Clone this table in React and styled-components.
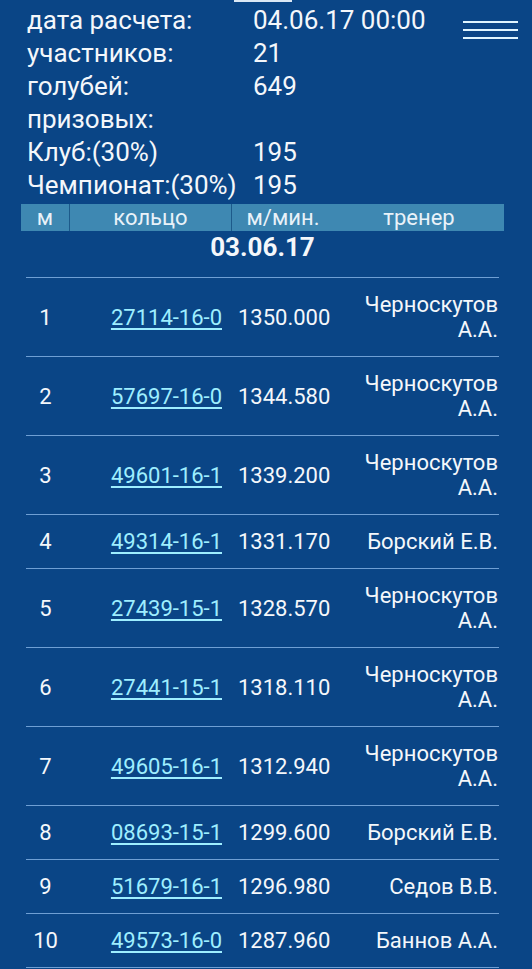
import React from "react";
import styled, { createGlobalStyle } from "styled-components";

const GlobalStyle = createGlobalStyle`
  html, body {
    margin: 0;
    padding: 0;
    background: #0a4586;
  }
  body {
    font-family: Roboto, "Liberation Sans", sans-serif;
    color: #f4f7fb;
  }
`;

const Page = styled.div`
  position: relative;
  width: 532px;
  min-height: 969px;
  overflow: hidden;
`;

const TopTab = styled.div`
  position: absolute;
  top: 0;
  left: 234px;
  width: 58px;
  height: 2px;
  background: #dbe8f5;
`;

const MenuButton = styled.div`
  position: absolute;
  top: 21px;
  left: 463px;
  width: 55px;
  display: flex;
  flex-direction: column;
  gap: 6px;
`;

const MenuLine = styled.span`
  display: block;
  height: 2px;
  background: #dff5ff;
`;

const Info = styled.div`
  display: grid;
  grid-template-columns: 226px auto;
  padding: 4px 0 0 27px;
  font-size: 26px;
  line-height: 33px;
`;

const TableHead = styled.div`
  display: grid;
  grid-template-columns: 49px 162px 102px 1fr;
  margin: 2px 28px 0 21px;
  height: 27px;
  background: #3e88b2;
  font-size: 22px;
  line-height: 27px;
  color: #e9f2f9;
`;

const HeadCell = styled.div`
  text-align: center;
  border-right: ${(p) => (p.$divider ? "1px solid #1d5a8a" : "none")};
`;

const DateRow = styled.div`
  margin: 0 33px 0 26px;
  padding: 0 0 14px;
  text-align: center;
  font-size: 26px;
  font-weight: 700;
  line-height: 32px;
  border-bottom: 1px solid #6f9fd4;
`;

const Row = styled.div`
  display: grid;
  grid-template-columns: 39px 169px 100px 1fr;
  align-items: center;
  margin: 0 33px 0 26px;
  padding: 14px 0;
  border-bottom: 1px solid #6f9fd4;
  font-size: 22px;
  line-height: 25px;
`;

const Place = styled.div`
  text-align: center;
`;

const Ring = styled.a`
  justify-self: end;
  margin-right: 12px;
  color: #9eeeff;
  text-decoration: underline;
  text-underline-offset: 3px;
`;

const Speed = styled.div`
  padding-left: 4px;
`;

const Trainer = styled.div`
  text-align: right;
  padding-right: 1px;
`;

const info = [
  ["дата расчета:", "04.06.17 00:00"],
  ["участников:", "21"],
  ["голубей:", "649"],
  ["призовых:", ""],
  ["Клуб:(30%)", "195"],
  ["Чемпионат:(30%)", "195"],
];

const rows = [
  [1, "27114-16-0", "1350.000", "Черноскутов А.А."],
  [2, "57697-16-0", "1344.580", "Черноскутов А.А."],
  [3, "49601-16-1", "1339.200", "Черноскутов А.А."],
  [4, "49314-16-1", "1331.170", "Борский Е.В."],
  [5, "27439-15-1", "1328.570", "Черноскутов А.А."],
  [6, "27441-15-1", "1318.110", "Черноскутов А.А."],
  [7, "49605-16-1", "1312.940", "Черноскутов А.А."],
  [8, "08693-15-1", "1299.600", "Борский Е.В."],
  [9, "51679-16-1", "1296.980", "Седов В.В."],
  [10, "49573-16-0", "1287.960", "Баннов А.А."],
];

const App = () => {
  return (
    <Page>
      <GlobalStyle />
      <TopTab />
      <MenuButton>
        <MenuLine />
        <MenuLine />
        <MenuLine />
      </MenuButton>
      <Info>
        {info.map(([label, value]) => (
          <React.Fragment key={label}>
            <div>{label}</div>
            <div>{value}</div>
          </React.Fragment>
        ))}
      </Info>
      <TableHead>
        <HeadCell $divider>м</HeadCell>
        <HeadCell $divider>кольцо</HeadCell>
        <HeadCell>м/мин.</HeadCell>
        <HeadCell>тренер</HeadCell>
      </TableHead>
      <DateRow>03.06.17</DateRow>
      {rows.map(([place, ring, speed, trainer]) => (
        <Row key={place}>
          <Place>{place}</Place>
          <Ring href="#">{ring}</Ring>
          <Speed>{speed}</Speed>
          <Trainer>{trainer}</Trainer>
        </Row>
      ))}
    </Page>
  );
};

export default App;
